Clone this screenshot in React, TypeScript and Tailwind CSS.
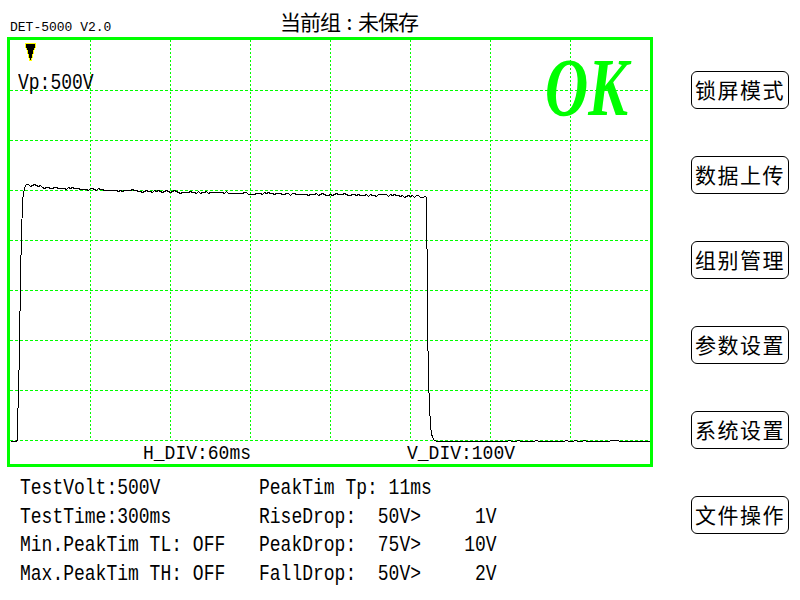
const mono = "font-['Liberation_Mono',monospace]";
const cjk = "font-['Noto_Sans_CJK_SC',sans-serif]";

const menuItems = ['锁屏模式', '数据上传', '组别管理', '参数设置', '系统设置', '文件操作'];

const leftStats = ['TestVolt:500V', 'TestTime:300ms', 'Min.PeakTim TL: OFF', 'Max.PeakTim TH: OFF'];
const rightStats = ['PeakTim Tp: 11ms', 'RiseDrop:  50V>     1V', 'PeakDrop:  75V>    10V', 'FallDrop:  50V>     2V'];

// waveform in scope-local pixels (inner area is 640 x 424)
function buildWave(): string {
  let seed = 11;
  const rnd = () => {
    seed = (seed * 9301 + 49297) % 233280;
    return seed / 233280;
  };
  const pts: [number, number][] = [
    [0, 401], [5, 401], [7, 400], [7, 383], [8, 353], [9, 308], [10, 235],
    [11, 195], [12, 162], [13, 152], [15, 145], [16, 144],
  ];
  const top: [number, number][] = [
    [16, 144], [35, 147], [80, 149], [140, 151], [190, 152], [270, 153.5], [370, 155], [415, 156],
  ];
  const topY = (x: number) => {
    for (let i = 1; i < top.length; i++) {
      const [x0, y0] = top[i - 1];
      const [x1, y1] = top[i];
      if (x <= x1) return y0 + ((y1 - y0) * (x - x0)) / (x1 - x0);
    }
    return 156;
  };
  for (let x = 18; x <= 413; x += 2) {
    const r = rnd();
    const n = r < 0.25 ? -1 : r > 0.8 ? 1 : 0;
    pts.push([x, Math.round(topY(x)) + n]);
  }
  pts.push(
    [415, 156], [416, 157], [416, 208], [417, 209], [417, 280], [418, 340], [419, 365],
    [420, 385], [421, 393], [422, 397], [424, 400], [427, 401],
  );
  for (let x = 430; x <= 640; x += 3) {
    const r = rnd();
    pts.push([x, x > 470 && r > 0.8 ? 400 : 401]);
  }
  return pts.map(([x, y], i) => `${i ? 'L' : 'M'}${x + 0.5} ${y + 0.5}`).join(' ');
}

const wavePath = buildWave();

function Scope() {
  return (
    <div className="relative ml-[7px] w-[646px] h-[430px] border-[3px] border-[#00ff00]">
      <svg width={640} height={424} className="block" shapeRendering="crispEdges">
        {[1, 2, 3, 4, 5, 6, 7].map((k) => (
          <line key={`v${k}`} x1={80 * k + 0.5} y1={0} x2={80 * k + 0.5} y2={400} stroke="#00ff00" strokeWidth={1} strokeDasharray="2 2" />
        ))}
        {[1, 2, 3, 4, 5, 6, 7, 8].map((k) => (
          <line key={`h${k}`} x1={0} y1={50 * k + 0.5} x2={640} y2={50 * k + 0.5} stroke="#00ff00" strokeWidth={1} strokeDasharray="3 2" />
        ))}
        <path d={wavePath} fill="none" stroke="#000" strokeWidth={1} />
        {/* trigger marker */}
        <polygon
          points="15.5,3.5 25.5,3.5 25.5,6.5 23.5,11.5 21.5,20.5 19.5,20.5 17.5,11.5 15.5,6.5"
          fill="#000"
          stroke="#ffff00"
          strokeWidth={1}
        />
      </svg>

      <div className={`absolute left-[8px] top-[32px] text-[18px] leading-none scale-y-[1.2] origin-top ${mono}`}>Vp:500V</div>
      <div className="absolute left-[535px] top-[6px] origin-left scale-x-[0.72] text-[83px] leading-none italic font-bold text-[#00ff00] font-['Liberation_Serif',serif]">
        OK
      </div>
      <div className={`absolute left-[133px] top-[403px] text-[18px] leading-none scale-y-[1.15] origin-top ${mono}`}>H_DIV:60ms</div>
      <div className={`absolute left-[397px] top-[403px] text-[18px] leading-none scale-y-[1.15] origin-top ${mono}`}>V_DIV:100V</div>
    </div>
  );
}

export default function App() {
  return (
    <div className="w-[800px] h-[600px] bg-white text-black overflow-hidden">
      {/* header */}
      <div className="flex h-[37px]">
        <div className={`w-[280px] pl-[10px] pt-[21px] text-[13px] leading-none ${mono}`}>DET-5000 V2.0</div>
        <div className={`pt-[11px] text-[21px] leading-none tracking-[-1px] ${cjk}`}>
          当前组<span className="inline-block w-[18px] text-center">:</span>未保存
        </div>
      </div>

      <div className="flex">
        <div className="w-[653px]">
          <Scope />
          <div className={`flex mt-[7px] pl-[20px] text-[18px] leading-[28.5px] whitespace-pre ${mono}`}>
            <div className="w-[239px]">
              {leftStats.map((s) => (
                <div key={s} className="origin-left scale-y-[1.2]">{s}</div>
              ))}
            </div>
            <div>
              {rightStats.map((s) => (
                <div key={s} className="origin-left scale-y-[1.2]">{s}</div>
              ))}
            </div>
          </div>
        </div>

        <div className="ml-[38px] pt-[34px] flex flex-col gap-[47px]">
          {menuItems.map((label) => (
            <div
              key={label}
              className={`w-[98px] h-[38px] flex items-center justify-center border border-black rounded-[6px] text-[21px] tracking-[1.5px] ${cjk}`}
            >
              {label}
            </div>
          ))}
        </div>
      </div>
    </div>
  );
}
